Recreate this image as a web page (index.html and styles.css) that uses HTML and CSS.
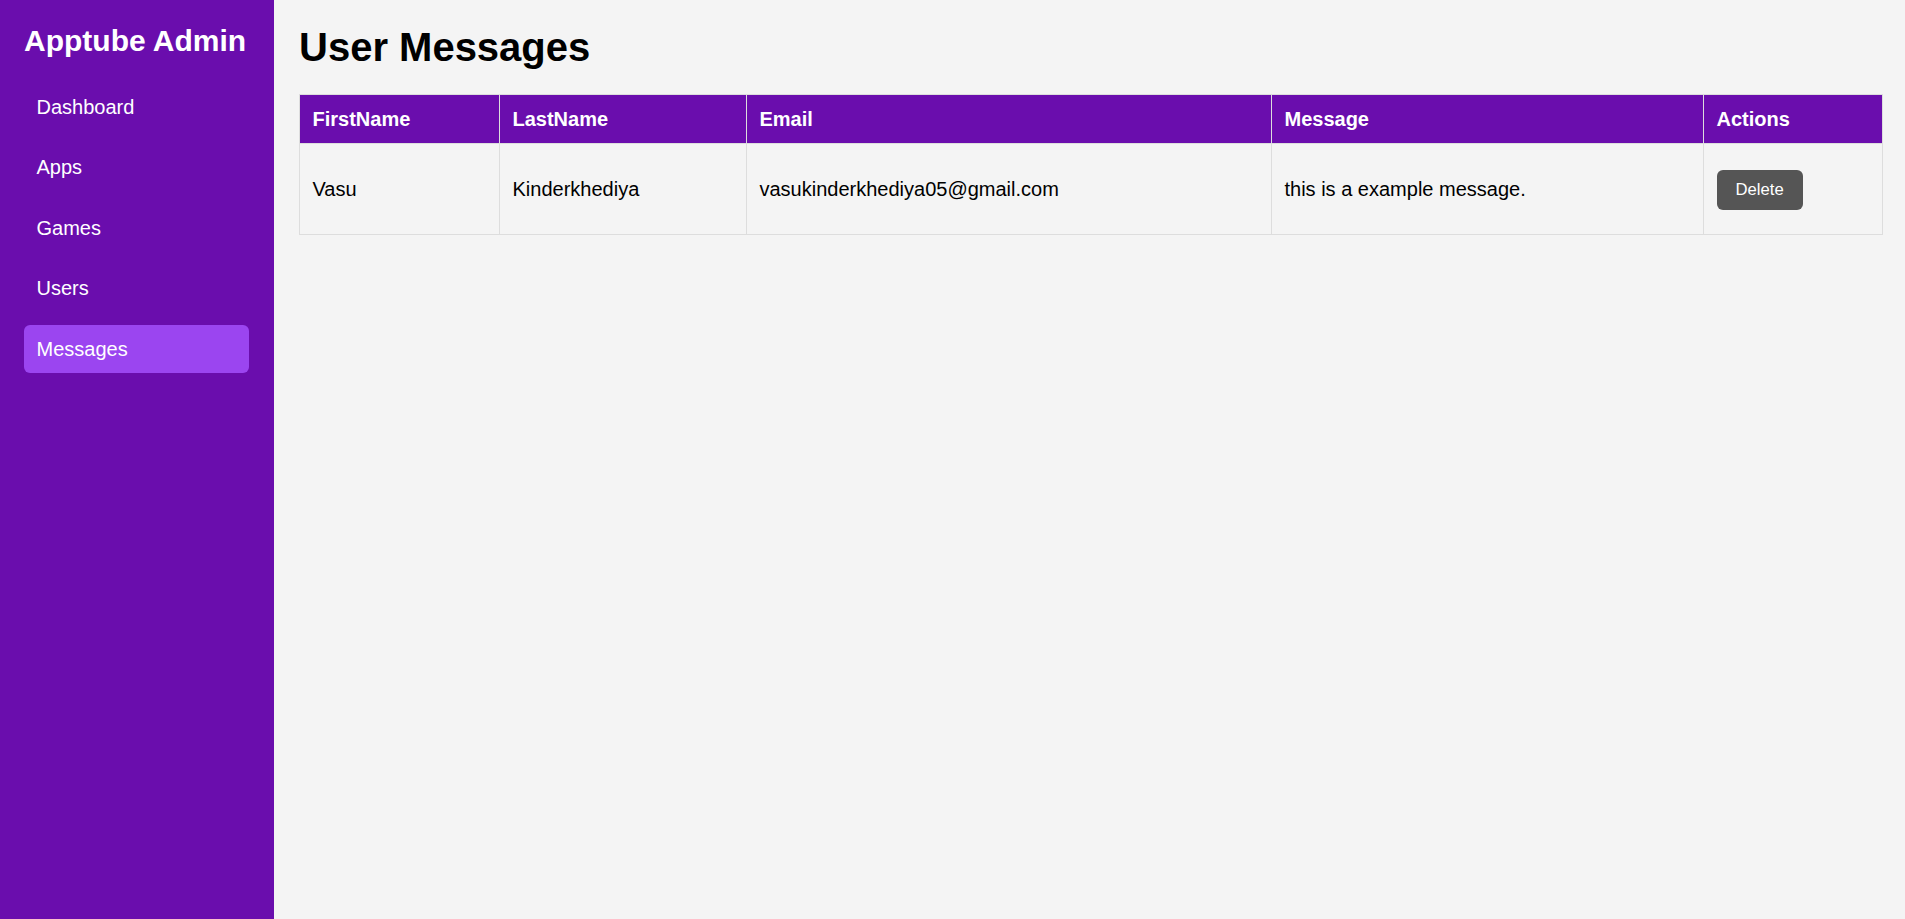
FILE: index.html
```html
<!DOCTYPE html>
<html lang="en">
<head>
<meta charset="utf-8">
<title>Apptube Admin - Messages</title>
<link rel="stylesheet" href="styles.css">
</head>
<body>
<div class="layout">
  <aside class="sidebar">
    <h2 class="brand">Apptube Admin</h2>
    <nav class="nav">
      <a class="nav-link" href="#">Dashboard</a>
      <a class="nav-link" href="#">Apps</a>
      <a class="nav-link" href="#">Games</a>
      <a class="nav-link" href="#">Users</a>
      <a class="nav-link active" href="#">Messages</a>
    </nav>
  </aside>
  <main class="main">
    <h1 class="page-title">User Messages</h1>
    <table class="msg-table">
      <thead>
        <tr>
          <th class="col-first">FirstName</th>
          <th class="col-last">LastName</th>
          <th class="col-email">Email</th>
          <th class="col-msg">Message</th>
          <th class="col-actions">Actions</th>
        </tr>
      </thead>
      <tbody>
        <tr>
          <td>Vasu</td>
          <td>Kinderkhediya</td>
          <td>vasukinderkhediya05@gmail.com</td>
          <td>this is a example message.</td>
          <td><button class="btn-delete" type="button">Delete</button></td>
        </tr>
      </tbody>
    </table>
  </main>
</div>
</body>
</html>
```
FILE: styles.css
```css
* {
  box-sizing: border-box;
}

html, body {
  margin: 0;
  padding: 0;
  height: 100%;
}

body {
  font-family: "Liberation Sans", Arial, sans-serif;
  font-size: 20px;
  background: #f4f4f4;
  color: #000;
}

.layout {
  display: flex;
  min-height: 100vh;
}

.sidebar {
  width: 274px;
  flex-shrink: 0;
  background: #6a0dad;
  color: #fff;
  padding: 23px 25px 25px 24px;
}

.brand {
  margin: 0 0 25px;
  font-size: 30px;
  font-weight: bold;
  line-height: 35px;
}

.nav {
  display: flex;
  flex-direction: column;
  gap: 12.5px;
}

.nav-link {
  display: block;
  color: #fff;
  text-decoration: none;
  font-size: 20px;
  line-height: 23px;
  padding: 12.5px 12.5px;
  border-radius: 6px;
}

.nav-link.active {
  background: #9b45f0;
}

.main {
  flex: 1;
  padding: 24px 22px 25px 25px;
}

.page-title {
  margin: 0 0 24px;
  font-size: 40px;
  line-height: 46px;
  font-weight: bold;
}

.msg-table {
  width: 100%;
  border-collapse: collapse;
  table-layout: fixed;
  border: 1px solid #ddd;
}

.msg-table th,
.msg-table td {
  border: 1px solid #ddd;
  padding: 12.5px 12.5px;
  text-align: left;
  font-size: 20px;
  line-height: 23px;
}

.msg-table th {
  background: #6a0dad;
  color: #fff;
  font-weight: bold;
}

.col-first { width: 200px; }
.col-last { width: 247px; }
.col-email { width: 525px; }
.col-msg { width: 432px; }

.btn-delete {
  margin: 13px 0 12px;
  font-family: "Liberation Sans", Arial, sans-serif;
  font-size: 16.67px;
  line-height: 20px;
  color: #fff;
  background: #555;
  border: none;
  border-radius: 6px;
  padding: 10px 19px;
  cursor: pointer;
}
```
